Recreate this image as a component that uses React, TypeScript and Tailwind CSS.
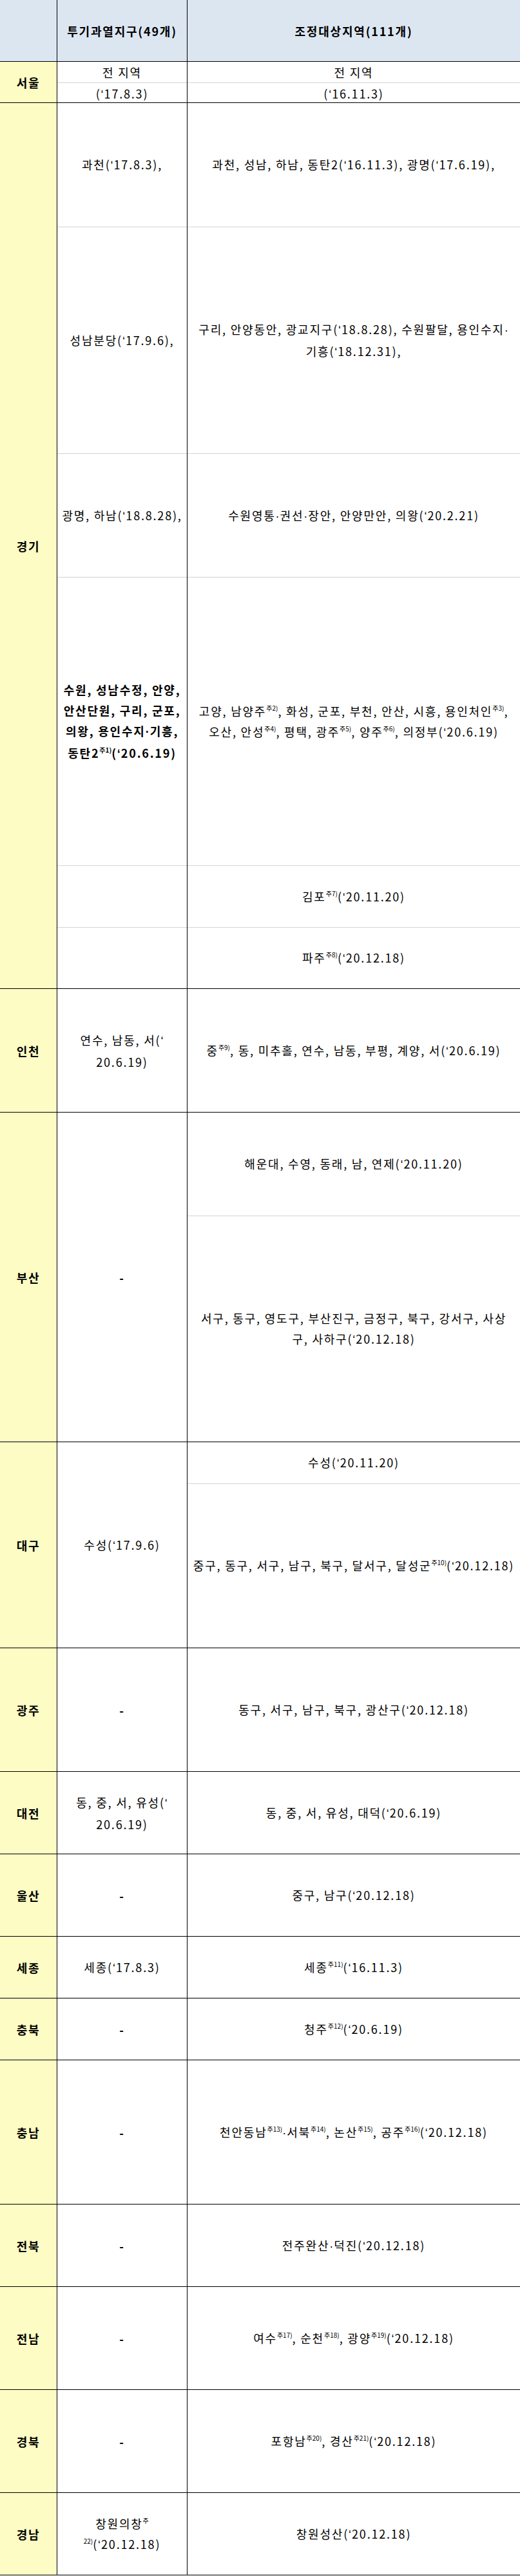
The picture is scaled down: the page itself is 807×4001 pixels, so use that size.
import type { ReactNode } from "react";

type Cell = { h: string; c?: ReactNode; bold?: boolean };
type Section = { label: string; h: string; mid: Cell[]; right: Cell[] };

const Sup = ({ children }: { children: ReactNode }) => (
  <sup className="text-[10px] top-[-8px] tracking-normal">{children}</sup>
);

// narrow latin glyphs for quote and middle dot (CJK font renders them full width)
const L = ({ children }: { children: ReactNode }) => (
  <span className="font-['Liberation_Sans',sans-serif] tracking-[1px]">{children}</span>
);

const fmt = (s: string): ReactNode => {
  const parts = s.split(/([‘·])/);
  return parts.map((p, i) => (p === "‘" || p === "·" ? <L key={i}>{p}</L> : p));
};

const sections: Section[] = [
  {
    label: "서울",
    h: "h-[64px]",
    mid: [
      { h: "h-[32px]", c: "전 지역" },
      { h: "flex-1", c: "(‘17.8.3)" },
    ],
    right: [
      { h: "h-[32px]", c: "전 지역" },
      { h: "flex-1", c: "(‘16.11.3)" },
    ],
  },
  {
    label: "경기",
    h: "h-[1376px]",
    mid: [
      { h: "h-[192px]", c: "과천(‘17.8.3)," },
      { h: "h-[352px]", c: "성남분당(‘17.9.6)," },
      { h: "h-[192px]", c: "광명, 하남(‘18.8.28)," },
      {
        h: "h-[448px]",
        bold: true,
        c: (
          <>
            수원, 성남수정, 안양,
            <br />
            안산단원, 구리, 군포,
            <br />
            의왕, 용인수지<L>·</L>기흥,
            <br />
            동탄2<Sup>주1)</Sup>(<L>‘</L>20.6.19)
          </>
        ),
      },
      { h: "h-[96px]" },
      { h: "flex-1" },
    ],
    right: [
      { h: "h-[192px]", c: "과천, 성남, 하남, 동탄2(‘16.11.3), 광명(‘17.6.19)," },
      {
        h: "h-[352px]",
        c: (
          <>
            구리, 안양동안, 광교지구(<L>‘</L>18.8.28), 수원팔달, 용인수지<L>·</L>
            <br />
            기흥(<L>‘</L>18.12.31),
          </>
        ),
      },
      { h: "h-[192px]", c: "수원영통·권선·장안, 안양만안, 의왕(‘20.2.21)" },
      {
        h: "h-[448px]",
        c: (
          <>
            고양, 남양주<Sup>주2)</Sup>, 화성, 군포, 부천, 안산, 시흥, 용인처인<Sup>주3)</Sup>,
            <br />
            오산, 안성<Sup>주4)</Sup>, 평택, 광주<Sup>주5)</Sup>, 양주<Sup>주6)</Sup>, 의정부(<L>‘</L>20.6.19)
          </>
        ),
      },
      {
        h: "h-[96px]",
        c: (
          <>
            김포<Sup>주7)</Sup>(<L>‘</L>20.11.20)
          </>
        ),
      },
      {
        h: "flex-1",
        c: (
          <>
            파주<Sup>주8)</Sup>(<L>‘</L>20.12.18)
          </>
        ),
      },
    ],
  },
  {
    label: "인천",
    h: "h-[192px]",
    mid: [
      {
        h: "flex-1",
        c: (
          <>
            연수, 남동, 서(<L>‘</L>
            <br />
            20.6.19)
          </>
        ),
      },
    ],
    right: [
      {
        h: "flex-1",
        c: (
          <>
            중<Sup>주9)</Sup>, 동, 미추홀, 연수, 남동, 부평, 계양, 서(<L>‘</L>20.6.19)
          </>
        ),
      },
    ],
  },
  {
    label: "부산",
    h: "h-[512px]",
    mid: [{ h: "flex-1", c: "-", bold: true }],
    right: [
      { h: "h-[160px]", c: "해운대, 수영, 동래, 남, 연제(‘20.11.20)" },
      {
        h: "flex-1",
        c: (
          <>
            서구, 동구, 영도구, 부산진구, 금정구, 북구, 강서구, 사상
            <br />
            구, 사하구(<L>‘</L>20.12.18)
          </>
        ),
      },
    ],
  },
  {
    label: "대구",
    h: "h-[320px]",
    mid: [{ h: "flex-1", c: "수성(‘17.9.6)" }],
    right: [
      { h: "h-[64px]", c: "수성(‘20.11.20)" },
      {
        h: "flex-1",
        c: (
          <>
            중구, 동구, 서구, 남구, 북구, 달서구, 달성군<Sup>주10)</Sup>(<L>‘</L>20.12.18)
          </>
        ),
      },
    ],
  },
  {
    label: "광주",
    h: "h-[192px]",
    mid: [{ h: "flex-1", c: "-", bold: true }],
    right: [{ h: "flex-1", c: "동구, 서구, 남구, 북구, 광산구(‘20.12.18)" }],
  },
  {
    label: "대전",
    h: "h-[128px]",
    mid: [
      {
        h: "flex-1",
        c: (
          <>
            동, 중, 서, 유성(<L>‘</L>
            <br />
            20.6.19)
          </>
        ),
      },
    ],
    right: [{ h: "flex-1", c: "동, 중, 서, 유성, 대덕(‘20.6.19)" }],
  },
  {
    label: "울산",
    h: "h-[128px]",
    mid: [{ h: "flex-1", c: "-", bold: true }],
    right: [{ h: "flex-1", c: "중구, 남구(‘20.12.18)" }],
  },
  {
    label: "세종",
    h: "h-[96px]",
    mid: [{ h: "flex-1", c: "세종(‘17.8.3)" }],
    right: [
      {
        h: "flex-1",
        c: (
          <>
            세종<Sup>주11)</Sup>(<L>‘</L>16.11.3)
          </>
        ),
      },
    ],
  },
  {
    label: "충북",
    h: "h-[96px]",
    mid: [{ h: "flex-1", c: "-", bold: true }],
    right: [
      {
        h: "flex-1",
        c: (
          <>
            청주<Sup>주12)</Sup>(<L>‘</L>20.6.19)
          </>
        ),
      },
    ],
  },
  {
    label: "충남",
    h: "h-[224px]",
    mid: [{ h: "flex-1", c: "-", bold: true }],
    right: [
      {
        h: "flex-1",
        c: (
          <>
            천안동남<Sup>주13)</Sup>
            <L>·</L>서북<Sup>주14)</Sup>, 논산<Sup>주15)</Sup>, 공주<Sup>주16)</Sup>(<L>‘</L>20.12.18)
          </>
        ),
      },
    ],
  },
  {
    label: "전북",
    h: "h-[128px]",
    mid: [{ h: "flex-1", c: "-", bold: true }],
    right: [{ h: "flex-1", c: "전주완산·덕진(‘20.12.18)" }],
  },
  {
    label: "전남",
    h: "h-[160px]",
    mid: [{ h: "flex-1", c: "-", bold: true }],
    right: [
      {
        h: "flex-1",
        c: (
          <>
            여수<Sup>주17)</Sup>, 순천<Sup>주18)</Sup>, 광양<Sup>주19)</Sup>(<L>‘</L>20.12.18)
          </>
        ),
      },
    ],
  },
  {
    label: "경북",
    h: "h-[160px]",
    mid: [{ h: "flex-1", c: "-", bold: true }],
    right: [
      {
        h: "flex-1",
        c: (
          <>
            포항남<Sup>주20)</Sup>, 경산<Sup>주21)</Sup>(<L>‘</L>20.12.18)
          </>
        ),
      },
    ],
  },
  {
    label: "경남",
    h: "h-[128px]",
    mid: [
      {
        h: "flex-1",
        c: (
          <>
            창원의창<Sup>주</Sup>
            <br />
            <Sup>22)</Sup>(<L>‘</L>20.12.18)
          </>
        ),
      },
    ],
    right: [{ h: "flex-1", c: "창원성산(‘20.12.18)" }],
  },
];

const CellBox = ({ cell, first }: { cell: Cell; first: boolean }) => (
  <div
    className={`${cell.h} ${first ? "" : "border-t border-[#d4d4d4]"} ${
      cell.bold ? "font-bold" : "font-normal"
    } flex items-center justify-center text-center whitespace-nowrap`}
  >
    <div>{typeof cell.c === "string" ? fmt(cell.c) : cell.c}</div>
  </div>
);

export default function App() {
  return (
    <div className="w-[807px] bg-white text-black font-['Noto_Sans_CJK_KR',sans-serif] text-[18px] leading-[32px] tracking-[1.8px]">
      {/* header */}
      <div className="flex h-[96px] bg-[#dce6f1] border-b border-black font-bold">
        <div className="w-[89px] shrink-0 border-r border-black" />
        <div className="w-[202px] shrink-0 border-r border-black flex items-center justify-center">
          투기과열지구(49개)
        </div>
        <div className="flex-1 flex items-center justify-center">조정대상지역(111개)</div>
      </div>

      {sections.map((s) => (
        <div key={s.label} className={`flex ${s.h} border-b border-black`}>
          <div className="w-[89px] shrink-0 bg-[#fcfcc4] border-r border-black flex items-center justify-center font-bold">
            {s.label}
          </div>
          <div className="w-[202px] shrink-0 border-r border-black flex flex-col">
            {s.mid.map((c, i) => (
              <CellBox key={i} cell={c} first={i === 0} />
            ))}
          </div>
          <div className="flex-1 flex flex-col">
            {s.right.map((c, i) => (
              <CellBox key={i} cell={c} first={i === 0} />
            ))}
          </div>
        </div>
      ))}
    </div>
  );
}
